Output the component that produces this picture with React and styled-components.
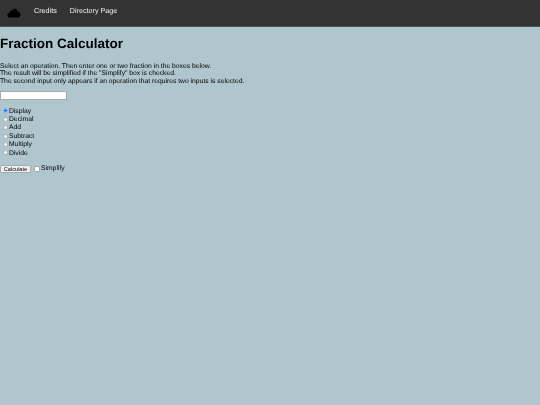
import React from 'react';
import styled, { createGlobalStyle } from 'styled-components';

const GlobalStyle = createGlobalStyle`
  html, body {
    margin: 0;
    min-height: 100%;
  }
  body {
    background-color: #afc6cf;
    color: #000;
    font-family: "Liberation Sans", Arial, sans-serif;
    font-size: 6.75px;
    line-height: 7.700px;
    text-rendering: geometricPrecision;
  }
`;

const Page = styled.div`
  filter: blur(0.3px);
`;

const Navbar = styled.nav`
  display: flex;
  align-items: flex-start;
  height: 27px;
  box-sizing: border-box;
  background-color: #333;
  border-bottom: 1px solid #555;
  padding-left: 7px;
`;

const Logo = styled.svg`
  width: 14px;
  height: 10px;
  margin-top: 8px;
  margin-right: 13px;
`;

const NavLink = styled.a`
  color: #f2f2f2;
  font-size: 7.2px;
  line-height: 10px;
  margin-top: 5.500px;
  margin-right: 13px;
  text-decoration: none;
`;

const Title = styled.h1`
  font-size: 13.5px;
  line-height: 16px;
  font-weight: bold;
  margin: 9px 0 10.500px;
`;

const Intro = styled.p`
  margin: 0 0 5.500px;
`;

const FractionInput = styled.input`
  display: block;
  box-sizing: border-box;
  width: 67px;
  height: 9px;
  padding: 0;
  margin: 0 0 7.200px;
  background: #fff;
  border: 0.5px solid #a8a8a8;
  border-radius: 0;
`;

const Operations = styled.div`
  display: flex;
  flex-direction: column;
  margin-bottom: 7.300px;
`;

const Operation = styled.label`
  display: flex;
  align-items: center;
  height: 8.4px;
`;

const Radio = styled.input`
  appearance: none;
  box-sizing: border-box;
  width: 5px;
  height: 5px;
  margin: -1px 1.500px 0 2.500px;
  background: #fff;
  border: 0.5px solid #a8a8a8;
  border-radius: 50%;
  &:checked {
    background: radial-gradient(circle, #0075ff 55%, #cfe3fb 70%);
    border-color: #7fb4f5;
  }
`;

const Controls = styled.div`
  display: flex;
  align-items: center;
`;

const CalcButton = styled.button`
  box-sizing: border-box;
  width: 31px;
  height: 7.500px;
  padding: 0;
  font-family: inherit;
  font-size: 5.600px;
  line-height: 6px;
  color: #000;
  background: #efefef;
  border: 0.5px solid #a8a8a8;
  border-radius: 1px;
`;

const Check = styled.input`
  appearance: none;
  box-sizing: border-box;
  width: 5.500px;
  height: 5.500px;
  margin: 0 1.500px 0 3px;
  background: #fff;
  border: 0.5px solid #a8a8a8;
  border-radius: 1px;
`;

const operations = ['Display', 'Decimal', 'Add', 'Subtract', 'Multiply', 'Divide'];

export default function App() {
  return (
    <Page>
      <GlobalStyle />
      <Navbar>
        <Logo viewBox="0 0 16 12">
          <path d="M3.5 11.5C1.5 11.5.2 10.2.2 8.6c0-1.5 1-2.6 2.4-2.9C2.9 3.9 4.3 2.8 5.9 3c.8-1.400 2.100-2.200 3.500-2 1.700.2 2.900 1.500 3 3.200 1.900.1 3.400 1.500 3.400 3.500 0 2.200-1.600 3.800-3.600 3.800z" fill="#000" />
        </Logo>
        <NavLink href="#">Credits</NavLink>
        <NavLink href="#">Directory Page</NavLink>
      </Navbar>
      <main>
        <Title>Fraction Calculator</Title>
        <Intro>
          Select an operation. Then enter one or two fraction in the boxes below.<br />
          The result will be simplified if the "Simplify" box is checked.<br />
          The second input only appears if an operation that requires two inputs is selected.
        </Intro>
        <FractionInput type="text" />
        <Operations>
          {operations.map((name, i) => (
            <Operation key={name}>
              <Radio type="radio" name="operation" defaultChecked={i === 0} />
              {name}
            </Operation>
          ))}
        </Operations>
        <Controls>
          <CalcButton type="button">Calculate</CalcButton>
          <Check type="checkbox" />
          <span>Simplify</span>
        </Controls>
      </main>
    </Page>
  );
}
